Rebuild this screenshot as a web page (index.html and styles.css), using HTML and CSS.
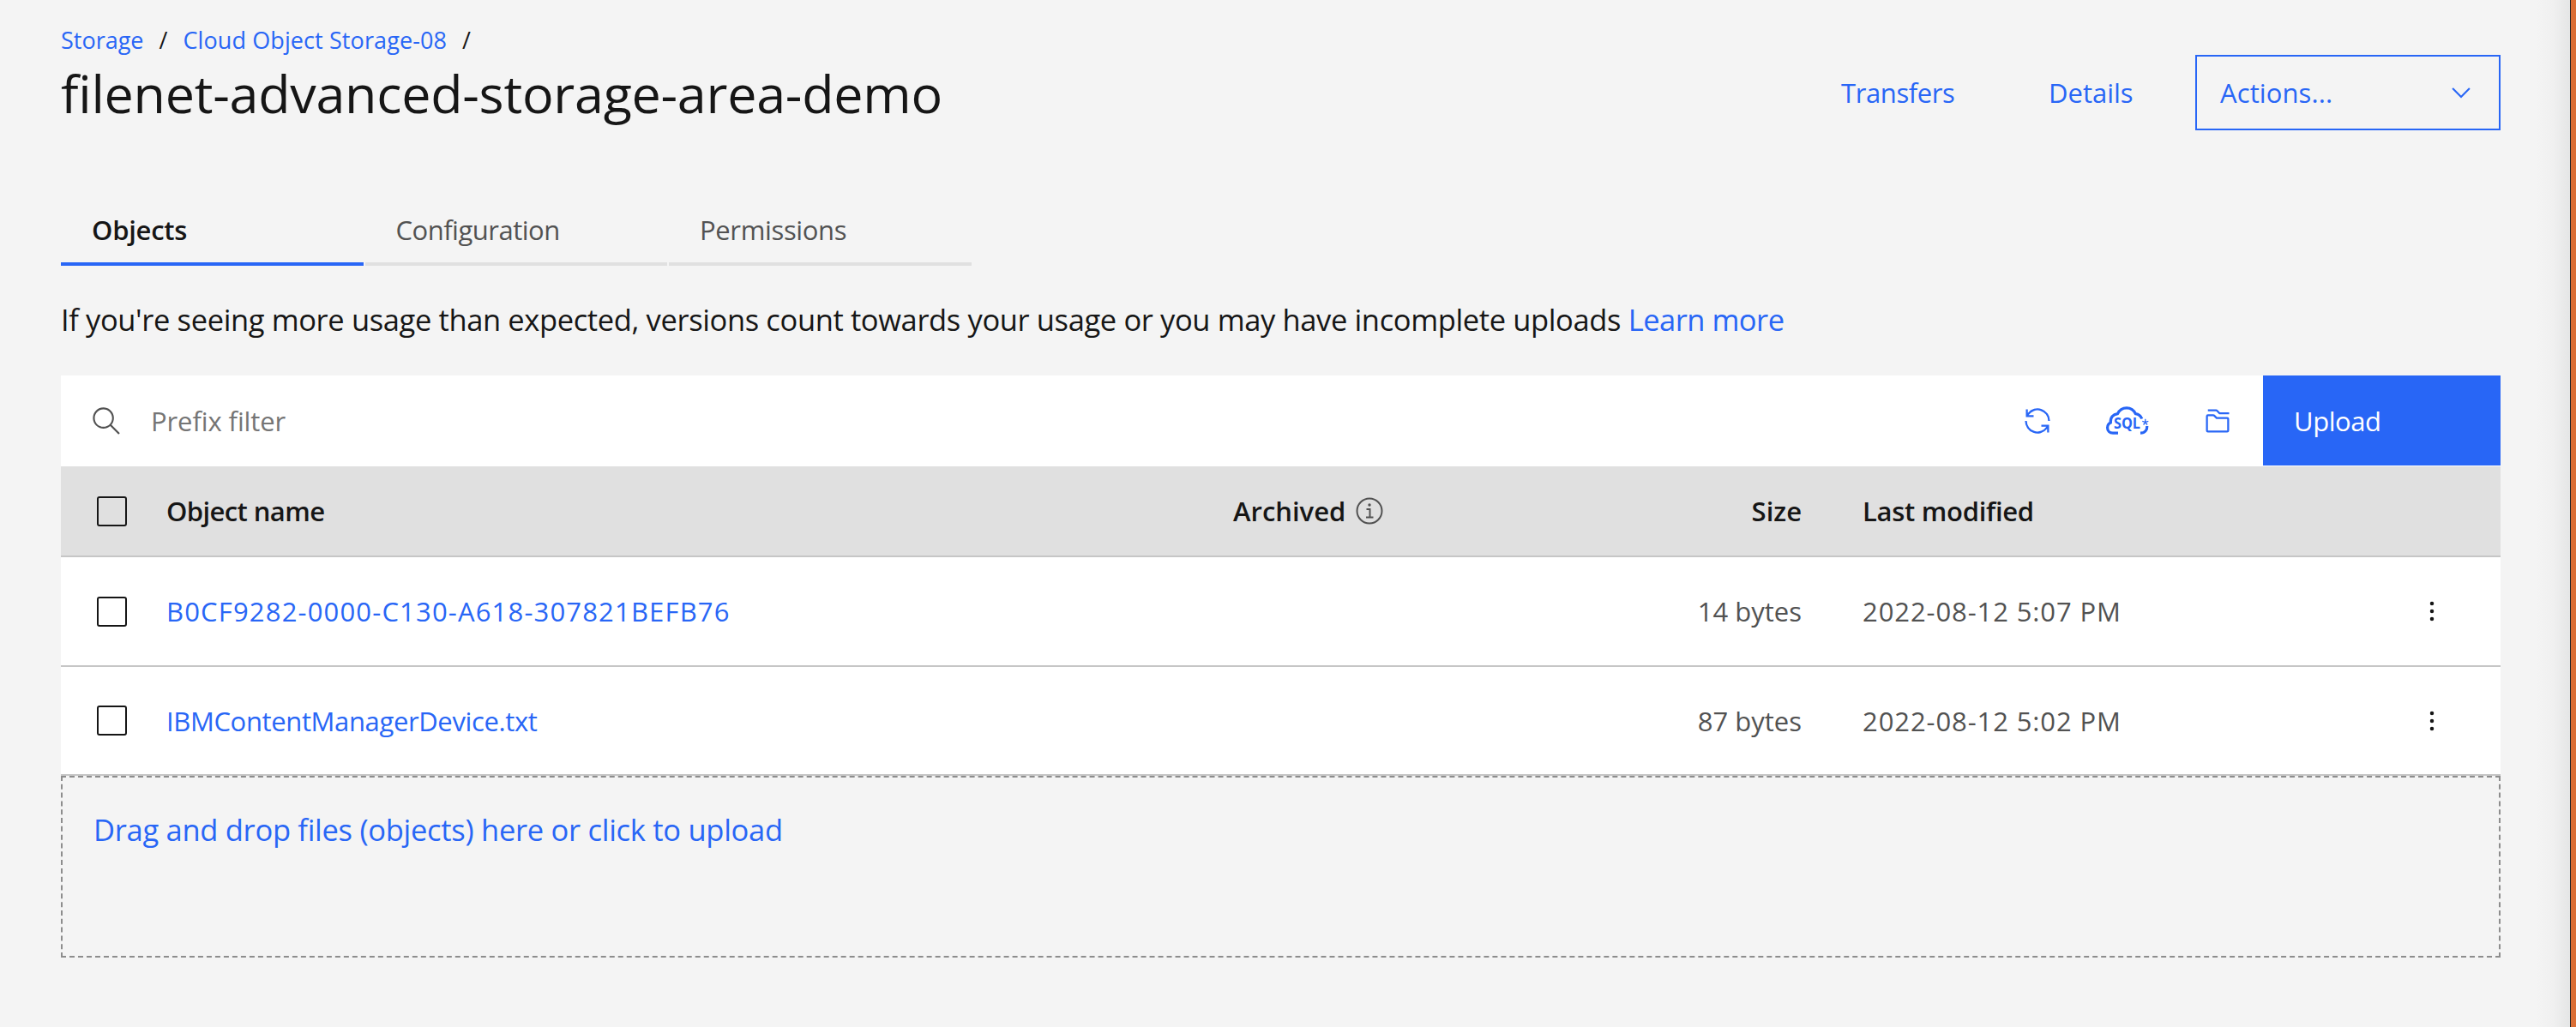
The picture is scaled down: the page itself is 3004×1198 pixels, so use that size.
FILE: index.html
```html
<!DOCTYPE html>
<html lang="en">
<head>
<meta charset="utf-8">
<title>filenet-advanced-storage-area-demo</title>
<link rel="stylesheet" href="styles.css">
</head>
<body>
<main class="page">
  <header class="header">
    <div>
      <nav class="breadcrumb"><a>Storage</a><span>/</span><a class="crumb-cos">Cloud Object Storage-08</a><span>/</span></nav>
      <h1 class="title">filenet-advanced-storage-area-demo</h1>
    </div>
    <div class="header-actions">
      <a class="link-transfers">Transfers</a>
      <a class="link-details">Details</a>
      <button class="actions"><span>Actions...</span>
        <svg width="34" height="34" viewBox="0 0 16 16" fill="currentColor"><path d="M8 11 3 6 3.7 5.3 8 9.6 12.3 5.3 13 6z"/></svg>
      </button>
    </div>
  </header>

  <nav class="tabs">
    <a class="tab tab-active">Objects</a>
    <a class="tab tab-config">Configuration</a>
    <a class="tab tab-perm">Permissions</a>
  </nav>

  <p class="notice"><span>If you're seeing more usage than expected, versions count towards your usage or you may have incomplete uploads</span> <a>Learn more</a></p>

  <section class="toolbar">
    <svg class="search-icon" width="36" height="36" viewBox="0 0 16 16" fill="currentColor"><path d="M15 14.3 10.7 10c1.9-2.3 1.6-5.8-.7-7.7S4.2.7 2.3 3 .7 8.8 3 10.7c2 1.7 5 1.7 7 0l4.3 4.3.7-.7zM2 6.500C2 4 4 2 6.500 2S11 4 11 6.500 9 11 6.500 11 2 9 2 6.500z"/></svg>
    <span class="placeholder">Prefix filter</span>
    <div class="tools">
      <svg width="36" height="36" viewBox="0 0 32 32" fill="currentColor"><path d="M12 10H6.780A11 11 0 0 1 27 16h2A13 13 0 0 0 6 7.680V4H4v8h8zM20 22h5.220A11 11 0 0 1 5 16H3a13 13 0 0 0 23 8.320V28h2V20H20z"/></svg>
      <svg width="52" height="48" viewBox="0 0 52 48" fill="none" stroke="currentColor" stroke-width="3.200"><path d="M15 38.200H9C5 38.200 2.600 35.500 2.600 32C2.600 29 4 27 6.300 26C5.800 20 9 16.300 14.500 15.600C16.500 11.300 20.500 8.800 25 8.800C29.800 8.800 33.300 11.300 35.300 15.600C39 16.200 41.500 18.200 42.800 21.500"/><path d="M48.800 30C49 34.500 46.500 38 41 38.200"/><path d="M46.800 25.500V21.800M46.800 25.500L50.300 24.300M46.800 25.500L49 28.500M46.800 25.500L44.600 28.500M46.800 25.500L43.300 24.300" stroke-width="1.300"/><text class="sql-text" x="10" y="33" textLength="31" lengthAdjust="spacingAndGlyphs">SQL</text></svg>
      <svg width="36" height="36" viewBox="0 0 32 32" fill="currentColor"><path d="M26 28H6a2 2 0 0 1-2-2V11A2 2 0 0 1 6 9h5.670a2 2 0 0 1 1.410.590L15.500 12H26a2 2 0 0 1 2 2V26A2 2 0 0 1 26 28ZM11.670 11H6V26H26V14H14.670Z"/><path d="M28 9H17.670l-3-3H6V4h8.670a2 2 0 0 1 1.410.590L18.500 7H28Z"/></svg>
    </div>
    <button class="upload">Upload</button>
  </section>

  <section class="table">
    <div class="row row-head">
      <i class="check"></i>
      <span class="th-name">Object name</span>
      <span class="archived"><span>Archived</span>
        <svg width="32" height="32" viewBox="0 0 32 32" fill="none" stroke="currentColor" stroke-width="2"><circle cx="16" cy="16" r="14.500"/><path d="M12.500 14H16.500V23M12 23.500H20.500"/><circle cx="16" cy="9" r="1.700" fill="currentColor" stroke="none"/></svg>
      </span>
      <span class="size">Size</span>
      <span class="th-date">Last modified</span>
      <span></span>
    </div>
    <div class="row">
      <i class="check"></i>
      <a class="name-id">B0CF9282-0000-C130-A618-307821BEFB76</a>
      <span></span>
      <span class="size">14 bytes</span>
      <span class="date">2022-08-12 5:07 PM</span>
      <svg width="36" height="36" viewBox="0 0 32 32"><circle cx="16" cy="8" r="2"/><circle cx="16" cy="16" r="2"/><circle cx="16" cy="24" r="2"/></svg>
    </div>
    <div class="row row-last">
      <i class="check"></i>
      <a class="name-file">IBMContentManagerDevice.txt</a>
      <span></span>
      <span class="size">87 bytes</span>
      <span class="date">2022-08-12 5:02 PM</span>
      <svg width="36" height="36" viewBox="0 0 32 32"><circle cx="16" cy="8" r="2"/><circle cx="16" cy="16" r="2"/><circle cx="16" cy="24" r="2"/></svg>
    </div>
  </section>

  <section class="dropzone"><a>Drag and drop files (objects) here or click to upload</a></section>
</main>
<aside class="edge"></aside>
</body>
</html>
```

FILE: styles.css
```css
* { box-sizing: border-box; }
body {
  margin: 0;
  height: 1198px;
  display: flex;
  overflow: hidden;
  background: #f4f4f4;
  color: #161616;
  font: 31px/40px "Open Sans", "Noto Sans", sans-serif;
  white-space: nowrap;
}
a { color: #2866f6; }
.page { flex: 1; padding: 26px 41px 0 71px; }
.edge {
  width: 47px;
  border-right: 6px solid #da6e35;
  background: linear-gradient(to right, #f4f4f4, #f0f0f0 50%, #e5e6e6 39px, #e5e6e6 40px, #202326 40px);
}

.header { display: flex; justify-content: space-between; height: 210px; }
.breadcrumb { display: flex; gap: 18px; font-size: 27px; line-height: 41px; }
.crumb-cos { letter-spacing: 0.1px; }
.title { margin: 7px 0 0; font-size: 61px; line-height: 70px; font-weight: 400; letter-spacing: -0.26px; }
.header-actions { display: flex; align-items: center; height: 88px; margin-top: 38px; color: #2866f6; }
.link-transfers { width: 242px; letter-spacing: -0.4px; }
.link-details { width: 171px; }
.actions {
  display: flex;
  justify-content: space-between;
  align-items: center;
  width: 356px;
  height: 88px;
  padding: 0 27px;
  border: 2px solid #2866f6;
  background: none;
  color: #2866f6;
  font: inherit;
  letter-spacing: 0.1px;
}

.tabs { display: flex; gap: 2px; height: 74px; }
.tab {
  width: 352.500px;
  padding: 12px 36px 0;
  border-bottom: 4px solid #e0e0e0;
  color: #525252;
}
.tab-active { border-color: #2866f6; color: #161616; font-weight: 600; letter-spacing: -0.25px; }
.tab-config { letter-spacing: -0.5px; }
.tab-perm { letter-spacing: -0.35px; }

.notice { margin: 37px 0 0; height: 91px; font-size: 34.500px; line-height: 52px; letter-spacing: -0.38px; }
.notice a { letter-spacing: -0.5px; }

.toolbar { display: flex; align-items: center; height: 106px; background: #fff; padding-left: 35px; }
.search-icon { color: #525252; margin-right: 34px; }
.placeholder { color: #757575; letter-spacing: -0.1px; }
.tools { display: flex; align-items: center; margin-left: auto; margin-right: 35px; gap: 61px; color: #2866f6; }
.sql-text { font: 700 18.500px "Open Sans", sans-serif; fill: currentColor; stroke: none; }
.upload {
  width: 277px;
  height: 105px;
  align-self: flex-start;
  padding: 0 36px;
  border: 0;
  background: #2866f6;
  color: #fff;
  font: inherit;
  letter-spacing: -0.45px;
  text-align: left;
}

.row {
  display: grid;
  grid-template-columns: 81px 1244px 450px 213px 717px 1fr;
  align-items: center;
  height: 128px;
  padding-left: 42px;
  border-bottom: 2px solid #c6c6c6;
  background: #fff;
  color: #525252;
}
.row-head { height: 106px; background: #e0e0e0; color: #161616; font-weight: 600; }
.row-last { height: 127px; }
.check { width: 35px; height: 35px; border: 2px solid #161616; border-radius: 3px; }
.row-head svg { color: #525252; }
.archived { display: flex; align-items: center; gap: 12px; }
.size { text-align: right; }
.date, .th-date { padding-left: 71px; }
.date { letter-spacing: 0.9px; }
.th-date { letter-spacing: -0.3px; }
.th-name { letter-spacing: -0.6px; }
.name-id { letter-spacing: 1.170px; }
.name-file { letter-spacing: -0.37px; }
.row > svg { fill: #161616; }

.dropzone {
  height: 212px;
  padding: 35px 36px;
  border: 2px dashed #8d8d8d;
  font-size: 34.500px;
  line-height: 52px;
  letter-spacing: -0.29px;
}
```
